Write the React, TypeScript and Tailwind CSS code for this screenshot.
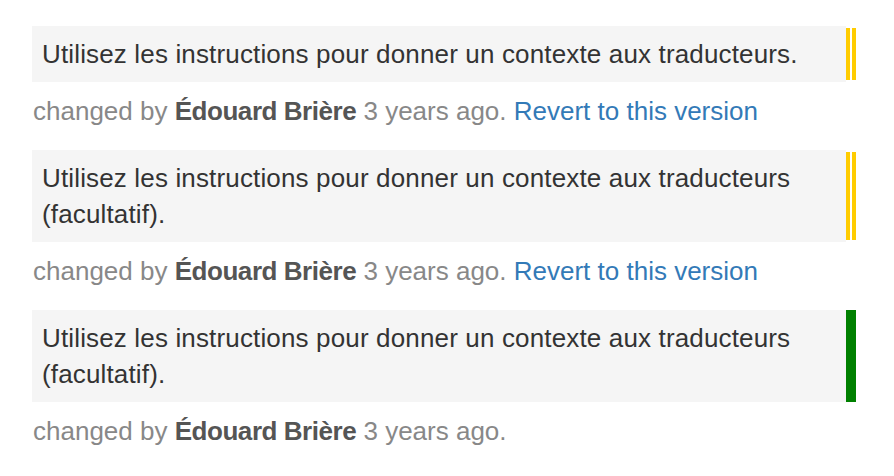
const items = [
  { text: "Utilisez les instructions pour donner un contexte aux traducteurs.", status: "fuzzy", revert: true },
  { text: "Utilisez les instructions pour donner un contexte aux traducteurs (facultatif).", status: "fuzzy", revert: true },
  { text: "Utilisez les instructions pour donner un contexte aux traducteurs (facultatif).", status: "current", revert: false },
]

export default function App() {
  return (
    <div
      className="w-[894px] h-[476px] bg-white pt-[26px] pl-[32px] text-[26px]"
      style={{ fontFamily: '"Liberation Sans", Arial, sans-serif' }}
    >
      {items.map((item, i) => (
        <div key={i} className="w-[824px]">
          <div className="flex">
            <div className="flex-1 bg-[#f5f5f5] px-[10px] py-[10px] leading-[36px] tracking-[0.15px] text-[#333]">
              {item.text}
            </div>
            {item.status === "fuzzy" ? (
              <div className="flex w-[10px] gap-[2px] py-[2px]">
                <div className="w-[4px] bg-[#ffcc00]" />
                <div className="w-[4px] bg-[#ffcc00]" />
              </div>
            ) : (
              <div className="w-[10px] bg-[#008000]" />
            )}
          </div>
          <div className="pl-px pt-[11px] pb-[21px] leading-[36px] text-[#888]">
            changed by{" "}
            <strong className="font-bold tracking-[-0.45px] text-[#555]">Édouard Brière</strong> 3 years ago.
            {item.revert && (
              <>
                {" "}
                <a href="#" className="text-[#337ab7]">
                  Revert to this version
                </a>
              </>
            )}
          </div>
        </div>
      ))}
    </div>
  )
}
